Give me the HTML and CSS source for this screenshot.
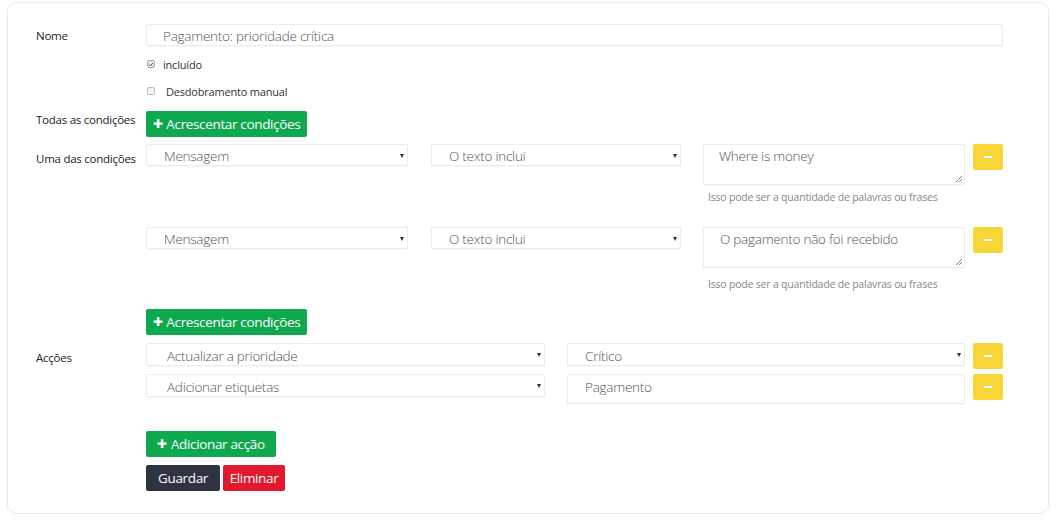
FILE: index.html
```html
<!DOCTYPE html>
<html>
<head>
<meta charset="utf-8">
<link rel="stylesheet" href="styles.css">
</head>
<body>
<div class="card">
  <div class="row row-nome">
    <div class="label">Nome</div>
    <div class="control text-input">Pagamento: prioridade crítica</div>
  </div>
  <div class="row row-check1">
    <div class="label"></div>
    <div class="check"><span class="cb cb-on"><svg viewBox="0 0 8 8" width="8" height="8"><path d="M1.6 4.2 L3.2 5.8 L6.4 2.2" fill="none" stroke="#333" stroke-width="1.3"/></svg></span><span class="check-text">incluído</span></div>
  </div>
  <div class="row row-check2">
    <div class="label"></div>
    <div class="check"><span class="cb"></span><span class="check-text wide">Desdobramento manual</span></div>
  </div>
  <div class="row row-todas">
    <div class="label label-todas">Todas as condições</div>
    <div><button class="btn btn-green btn-cond"><span class="plus">✚</span>Acrescentar condições</button></div>
  </div>
  <div class="row row-uma">
    <div class="label label-uma">Uma das condições</div>
    <div class="conds">
      <div class="cond">
        <div class="select s-field">Mensagem<span class="arrow"></span></div>
        <div class="select s-op">O texto inclui<span class="arrow"></span></div>
        <div class="ta-wrap">
          <div class="textarea">Where is money<span class="grip"></span></div>
          <div class="help">Isso pode ser a quantidade de palavras ou frases</div>
        </div>
        <button class="btn btn-yellow"><span class="minus"></span></button>
      </div>
      <div class="cond cond2">
        <div class="select s-field">Mensagem<span class="arrow"></span></div>
        <div class="select s-op">O texto inclui<span class="arrow"></span></div>
        <div class="ta-wrap">
          <div class="textarea">O pagamento não foi recebido<span class="grip"></span></div>
          <div class="help help2">Isso pode ser a quantidade de palavras ou frases</div>
        </div>
        <button class="btn btn-yellow"><span class="minus"></span></button>
      </div>
    </div>
  </div>
  <div class="row row-add2">
    <div class="label"></div>
    <div><button class="btn btn-green btn-cond"><span class="plus">✚</span>Acrescentar condições</button></div>
  </div>
  <div class="row row-accoes">
    <div class="label label-acc">Acções</div>
    <div class="actions">
      <div class="action">
        <div class="select s-act">Actualizar a prioridade<span class="arrow"></span></div>
        <div class="select s-val">Crítico<span class="arrow"></span></div>
        <button class="btn btn-yellow"><span class="minus"></span></button>
      </div>
      <div class="action">
        <div class="select s-act">Adicionar etiquetas<span class="arrow"></span></div>
        <div class="tag-input">Pagamento</div>
        <button class="btn btn-yellow"><span class="minus"></span></button>
      </div>
    </div>
  </div>
  <div class="row row-addact">
    <div class="label"></div>
    <div><button class="btn btn-green btn-act"><span class="plus">✚</span>Adicionar acção</button></div>
  </div>
  <div class="row row-save">
    <div class="label"></div>
    <div class="save-btns"><button class="btn btn-dark">Guardar</button><button class="btn btn-red">Eliminar</button></div>
  </div>
</div>
</body>
</html>
```

FILE: styles.css
```css
* { box-sizing: border-box; }
html, body { margin: 0; padding: 0; background: #fff; }
body {
  font-family: "Open Sans", "Noto Sans", sans-serif;
  color: #222;
}
.card {
  margin: 2px 7px 0 7px;
  width: 1042px;
  height: 512px;
  border: 1px solid #ebebeb;
  border-radius: 10px;
  box-shadow: 0 0 2px rgba(0,0,0,0.05);
  padding: 21px 45px 0 28px;
}
.row {
  display: grid;
  grid-template-columns: 110px 1fr;
}
.label {
  font-size: 11.5px;
  color: #222;
  line-height: 14px;
  letter-spacing: -0.25px;
}
.row-nome .label { padding-top: 5px; }
.control, .select, .textarea, .tag-input {
  border: 1px solid #ececec;
  border-radius: 2px;
  background: #fff;
  box-shadow: 0 1px 1px rgba(0,0,0,0.03);
  font-size: 13.5px;
  color: #555;
  font-weight: 300;
  letter-spacing: -0.25px;
}
.text-input {
  height: 22px;
  line-height: 20px;
  padding: 1px 0 0 16px;
}
.row-check1 { margin-top: 11px; }
.row-check2 { margin-top: 13px; }
.check {
  display: flex;
  align-items: center;
  height: 14px;
  font-size: 11px;
  color: #333;
  letter-spacing: -0.2px;
}
.cb {
  width: 8px;
  height: 8px;
  margin-left: 1px;
  border: 1px solid #bbb;
  border-radius: 2px;
  background: #f4f4f4;
  display: inline-flex;
  align-items: center;
  justify-content: center;
}
.cb-on { background: #e9e9e9; border-color: #aaa; }
.cb svg { display: block; width: 7px; height: 7px; }
.check-text { margin-left: 8px; }
.check-text.wide { margin-left: 11px; }
.row-todas { margin-top: 13px; }
.label-todas { padding-top: 2px; }
.btn {
  font-family: inherit;
  border: none;
  border-radius: 2px;
  height: 26px;
  padding: 0;
  font-size: 13.5px;
  color: #fff;
  cursor: pointer;
  display: inline-flex;
  align-items: center;
  justify-content: center;
  letter-spacing: -0.35px;
}
.btn-green { background: #0ea84f; }
.btn-cond { width: 161px; }
.btn-act { width: 130px; }
.plus { font-size: 11.5px; margin-right: 4px; position: relative; top: -1px; }
.row-uma { margin-top: 7px; }
.label-uma { padding-top: 8px; }
.cond {
  display: flex;
  align-items: flex-start;
}
.cond2 { margin-top: 23px; }
.select {
  height: 22px;
  line-height: 20px;
  padding: 1px 0 0 17px;
  position: relative;
}
.arrow {
  position: absolute;
  right: 3px;
  top: 9px;
  width: 0;
  height: 0;
  border-left: 2.5px solid transparent;
  border-right: 2.5px solid transparent;
  border-top: 4px solid #333;
}
.s-field { width: 262px; }
.s-op { width: 250px; margin-left: 23px; }
.ta-wrap { width: 262px; margin-left: 22px; }
.textarea {
  height: 41px;
  padding: 2px 0 0 15px;
  line-height: 18px;
  position: relative;
}
.cond2 .textarea { padding-left: 16px; }
.grip {
  position: absolute;
  right: 2px;
  bottom: 2px;
  width: 6px;
  height: 6px;
  background: linear-gradient(135deg, transparent 45%, #888 45%, #888 55%, transparent 55%, transparent 70%, #888 70%, #888 80%, transparent 80%);
}
.help {
  font-size: 10.5px;
  color: #888;
  margin-top: 5px;
  padding-left: 5px;
  letter-spacing: -0.2px;
  line-height: 14px;
}
.help2 { margin-top: 9px; }
.btn-yellow {
  background: #f8d637;
  width: 30px;
  margin-left: 8px;
}
.minus { display: block; width: 8px; height: 2px; background: #fff; }
.row-add2 { margin-top: 18px; }
.row-accoes { margin-top: 8px; }
.label-acc { padding-top: 8px; }
.action { display: flex; align-items: flex-start; }
.action + .action { margin-top: 5px; }
.s-act { width: 399px; height: 23px; padding-left: 20px; line-height: 22px; }
.s-val { width: 398px; height: 23px; margin-left: 22px; line-height: 22px; }
.tag-input { width: 398px; height: 30px; margin-left: 22px; padding-left: 17px; line-height: 24px; }
.row-addact { margin-top: 27px; }
.row-save { margin-top: 8px; }
.save-btns { display: flex; gap: 3px; }
.btn-dark { background: #2d3340; width: 74px; }
.btn-red { background: #e2182e; width: 62px; }
```
